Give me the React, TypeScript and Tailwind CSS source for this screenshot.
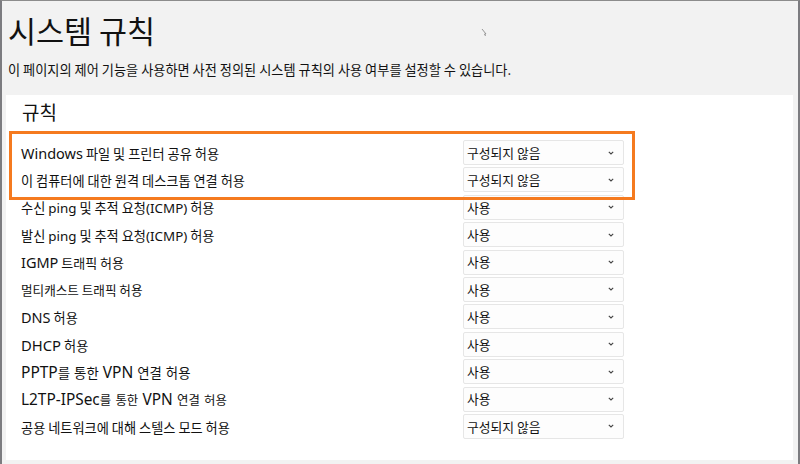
import React from "react";

type Row = { label: string; value: string; ko: string; en: string };

const rows: Row[] = [
  { label: "Windows 파일 및 프린터 공유 허용", value: "구성되지 않음", ko: "text-[13.2px]", en: "text-[14.5px]" },
  { label: "이 컴퓨터에 대한 원격 데스크톱 연결 허용", value: "구성되지 않음", ko: "text-[13.2px]", en: "text-[14.5px]" },
  { label: "수신 ping 및 추적 요청(ICMP) 허용", value: "사용", ko: "text-[13.2px]", en: "text-[13.4px]" },
  { label: "발신 ping 및 추적 요청(ICMP) 허용", value: "사용", ko: "text-[13.2px]", en: "text-[13.4px]" },
  { label: "IGMP 트래픽 허용", value: "사용", ko: "text-[13px]", en: "text-[14.5px]" },
  { label: "멀티캐스트 트래픽 허용", value: "사용", ko: "text-[12.6px]", en: "text-[14.5px]" },
  { label: "DNS 허용", value: "사용", ko: "text-[13.2px]", en: "text-[14.5px]" },
  { label: "DHCP 허용", value: "사용", ko: "text-[13.2px]", en: "text-[14.8px]" },
  { label: "PPTP를 통한 VPN 연결 허용", value: "사용", ko: "text-[13.4px] [word-spacing:1px]", en: "text-[15.5px]" },
  { label: "L2TP-IPSec를 통한 VPN 연결 허용", value: "사용", ko: "text-[12.4px] [word-spacing:1.5px]", en: "text-[15.4px]" },
  { label: "공용 네트워크에 대해 스텔스 모드 허용", value: "구성되지 않음", ko: "text-[13.2px]", en: "text-[14.5px]" },
];

function Mixed({ text, ko, en }: { text: string; ko: string; en: string }) {
  const parts = text.split(/([A-Za-z0-9\-()]+)/);
  return (
    <span className={"whitespace-pre " + ko}>
      {parts.map((p, i) =>
        /^[A-Za-z0-9\-()]+$/.test(p) ? (
          <span key={i} className={en + " font-['Noto_Sans','Noto_Sans_CJK_KR',sans-serif]"}>
            {p}
          </span>
        ) : (
          <span key={i}>{p}</span>
        )
      )}
    </span>
  );
}

function Chevron() {
  return (
    <svg width="6" height="4" viewBox="0 0 6 4" className="shrink-0">
      <path d="M0.8 0.8 L3 3 L5.2 0.8" fill="none" stroke="#444" strokeWidth="1.1" />
    </svg>
  );
}

export default function App() {
  return (
    <div className="relative w-[800px] h-[464px] overflow-hidden bg-[#f2f2f2] border-t border-t-[#8c8c8c] border-l-2 border-l-[#7c7c80] border-r-2 border-r-[#7c7c80] font-['Noto_Sans_CJK_KR','Noto_Sans',sans-serif] text-[#111]">
      <div className="pl-[6px] pt-[9px] h-[49px] text-[30.5px] leading-[40px] font-normal whitespace-nowrap">
        시스템 규칙
      </div>
      <div className="pl-[6px] mt-[10px] h-[20px] text-[13.2px] leading-[20px] whitespace-nowrap">
        이 페이지의 제어 기능을 사용하면 사전 정의된 시스템 규칙의 사용 여부를 설정할 수 있습니다.
      </div>
      <div className="ml-[4px] mr-[5px] mt-[15px] h-[365px] bg-white pt-[5px]">
        <div className="pl-[16px] h-[24px] text-[19px] leading-[24px]">규칙</div>
        <div className="mt-[16px] flex flex-col">
          {rows.map((r, i) => (
            <div key={i} className="h-[27.4px] flex items-start">
              <div className="w-[457px] pl-[15px] h-[25px] pt-[2px] flex items-center whitespace-nowrap">
                <Mixed text={r.label} ko={r.ko} en={r.en} />
              </div>
              <div className="w-[161px] h-[25px] flex items-center justify-between pl-[3px] pr-[9px] bg-[#fdfdfd] border border-[#e6e6e6] rounded-[2px] text-[12.8px] whitespace-nowrap">
                <span>{r.value}</span>
                <Chevron />
              </div>
            </div>
          ))}
        </div>
      </div>
      <div className="absolute left-[7px] top-[130px] w-[626px] h-[69px] border-[3px] border-[#f57a1f]" />
      <svg className="absolute left-[477px] top-[26px]" width="10" height="12" viewBox="0 0 10 12">
        <path d="M3 2 L7 7 L5.5 7 L6.5 9" fill="none" stroke="#8a8a8a" strokeWidth="0.9" />
      </svg>
    </div>
  );
}
